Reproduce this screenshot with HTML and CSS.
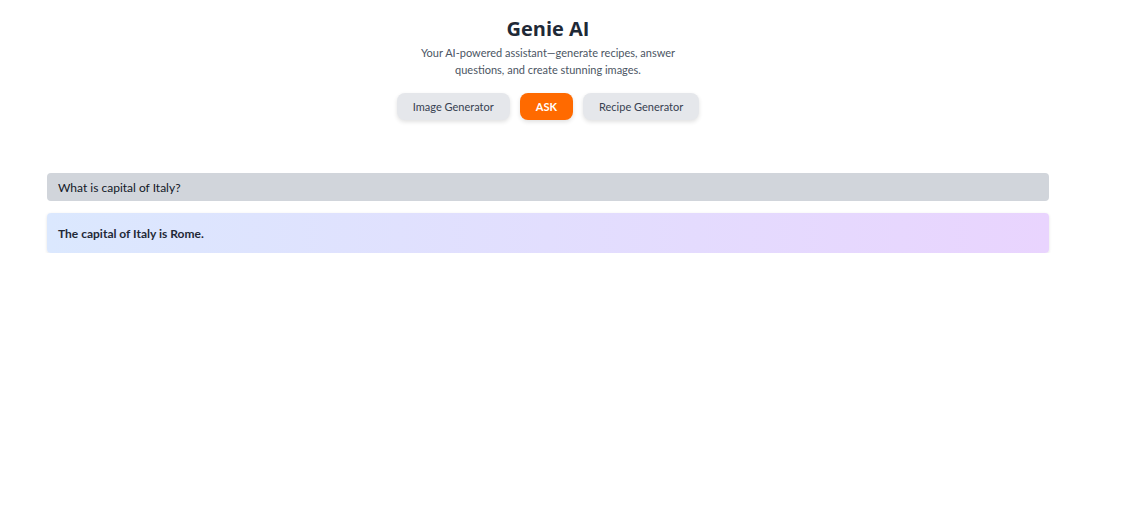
FILE: index.html
```html
<!DOCTYPE html>
<html>
<head>
<meta charset="utf-8">
<link rel="stylesheet" href="styles.css">
</head>
<body>
<div class="page">
  <header class="hero">
    <h1 class="title">Genie AI</h1>
    <p class="subtitle">Your AI-powered assistant—generate recipes, answer questions, and create stunning images.</p>
    <nav class="tabs">
      <button class="tab">Image Generator</button>
      <button class="tab active">ASK</button>
      <button class="tab">Recipe Generator</button>
    </nav>
  </header>
  <section class="chat">
    <div class="question">What is capital of Italy?</div>
    <div class="answer">The capital of Italy is Rome.</div>
  </section>
</div>
</body>
</html>
```
FILE: styles.css
```css
* { box-sizing: border-box; }
body {
  margin: 0;
  background: #ffffff;
  font-family: Lato, "Open Sans", sans-serif;
  color: #1f2937;
}
.page {
  width: 1002px;
  margin-left: 47px;
  padding-top: 16px;
}
.hero {
  display: flex;
  flex-direction: column;
  align-items: center;
}
.title {
  margin: 0;
  font-family: "Open Sans", sans-serif;
  font-size: 20px;
  line-height: 26px;
  font-weight: 700;
  color: #1f2937;
}
.subtitle {
  margin: 2px 0 0;
  max-width: 270px;
  text-align: center;
  font-size: 11px;
  line-height: 17px;
  color: #4b5563;
}
.tabs {
  display: flex;
  gap: 10px;
  margin-top: 15px;
}
.tab {
  height: 27px;
  padding: 0 16px;
  border: none;
  border-radius: 8px;
  background: #e5e7eb;
  color: #374151;
  font-family: inherit;
  font-size: 11px;
  box-shadow: 0 2px 4px rgba(0,0,0,0.12);
}
.tab.active {
  background: #ff6a00;
  color: #ffffff;
  font-weight: 700;
  padding: 0 16px;
}
.chat {
  margin-top: 53px;
  display: flex;
  flex-direction: column;
  gap: 12px;
}
.question {
  height: 28px;
  display: flex;
  align-items: center;
  padding: 0 11px;
  background: #d1d5db;
  border-radius: 4px;
  font-size: 12px;
  color: #111827;
}
.answer {
  height: 40px;
  display: flex;
  align-items: center;
  padding: 0 11px;
  border-radius: 4px;
  background: linear-gradient(90deg, #dbe8fe, #e9d4fe);
  box-shadow: 0 1px 3px rgba(0,0,0,0.12);
  font-size: 12px;
  font-weight: 700;
  color: #1f2937;
}
```
